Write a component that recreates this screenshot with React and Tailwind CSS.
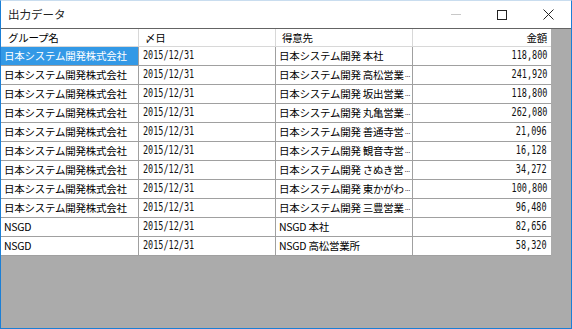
import React from 'react'

const rows = [
  ['日本システム開発株式会社', '2015/12/31', '日本システム開発 本社', '', '118,800'],
  ['日本システム開発株式会社', '2015/12/31', '日本システム開発 高松営業', '...', '241,920'],
  ['日本システム開発株式会社', '2015/12/31', '日本システム開発 坂出営業', '...', '118,800'],
  ['日本システム開発株式会社', '2015/12/31', '日本システム開発 丸亀営業', '...', '262,080'],
  ['日本システム開発株式会社', '2015/12/31', '日本システム開発 善通寺営', '...', '21,096'],
  ['日本システム開発株式会社', '2015/12/31', '日本システム開発 観音寺営', '...', '16,128'],
  ['日本システム開発株式会社', '2015/12/31', '日本システム開発 さぬき営', '...', '34,272'],
  ['日本システム開発株式会社', '2015/12/31', '日本システム開発 東かがわ', '...', '100,800'],
  ['日本システム開発株式会社', '2015/12/31', '日本システム開発 三豊営業', '...', '96,480'],
  ['NSGD', '2015/12/31', 'NSGD 本社', '', '82,656'],
  ['NSGD', '2015/12/31', 'NSGD 高松営業所', '', '58,320'],
]

const jp = "font-['Noto_Sans_CJK_JP',sans-serif] text-[10.5px] tracking-[-0.25px]"
const num = "font-['DejaVu_Sans_Mono',monospace] text-[11.5px] inline-block scale-x-[0.74]"

export default function App() {
  return (
    <div className="w-[572px] h-[329px] flex flex-col bg-white border border-[#1b7fd6] border-t-[#c9ddef] overflow-hidden">
      {/* title bar */}
      <div className="h-[27px] flex items-center shrink-0">
        <span className="font-['Noto_Sans_CJK_JP',sans-serif] text-[11.5px] text-[#222] pl-[7px]">出力データ</span>
        <div className="ml-auto flex items-center h-full">
          <div className="w-[46px] h-full flex items-center justify-center">
            <div className="w-[10px] h-px bg-[#c8c8c8]" />
          </div>
          <div className="w-[46px] h-full flex items-center justify-center">
            <div className="w-[10px] h-[10px] border border-[#222]" />
          </div>
          <div className="w-[46px] h-full flex items-center justify-center">
            <svg width="11" height="11" viewBox="0 0 11 11">
              <path d="M0.5 0.5 L10.5 10.5 M10.5 0.5 L0.5 10.5" stroke="#222" strokeWidth="1" />
            </svg>
          </div>
        </div>
      </div>

      {/* grid area */}
      <div className="flex-1 bg-[#ababab] border-t border-[#646464]">
        <div className="w-[550px] grid grid-cols-[138px_137px_137px_138px] bg-white">
          <div className={`${jp} h-[18px] text-black flex items-center pl-[7px] border-r border-b border-[#d8d8d8]`}>グループ名</div>
          <div className={`${jp} h-[18px] text-black flex items-center pl-[6px] border-r border-b border-[#d8d8d8]`}>〆日</div>
          <div className={`${jp} h-[18px] text-black flex items-center pl-[6px] border-r border-b border-[#d8d8d8]`}>得意先</div>
          <div className={`${jp} h-[18px] text-black flex items-center justify-end pr-[4px] border-b border-[#d8d8d8]`}>金額</div>
          {rows.map((r, i) => (
            <React.Fragment key={i}>
              <div className={`${jp} h-[19px] flex items-center pl-[3px] border-r border-b border-[#a0a0a0] whitespace-nowrap ${i === 0 ? 'bg-[#3399e6] text-white' : 'text-black'}`}>{r[0]}</div>
              <div className="h-[19px] flex items-center pl-[4px] border-r border-b border-[#a0a0a0] text-[#111]">
                <span className={`${num} origin-left`}>{r[1]}</span>
              </div>
              <div className={`${jp} h-[19px] text-black flex items-center pl-[3px] border-r border-b border-[#a0a0a0] whitespace-nowrap`}>
                {r[2]}
                {r[3] && <span className="font-['Liberation_Sans',sans-serif] text-[8px] tracking-[-0.5px] self-end pb-[3px] pl-px">{r[3]}</span>}
              </div>
              <div className="h-[19px] flex items-center justify-end pr-[4px] border-b border-[#a0a0a0] text-[#111]">
                <span className={`${num} origin-right`}>{r[4]}</span>
              </div>
            </React.Fragment>
          ))}
        </div>
      </div>
    </div>
  )
}
